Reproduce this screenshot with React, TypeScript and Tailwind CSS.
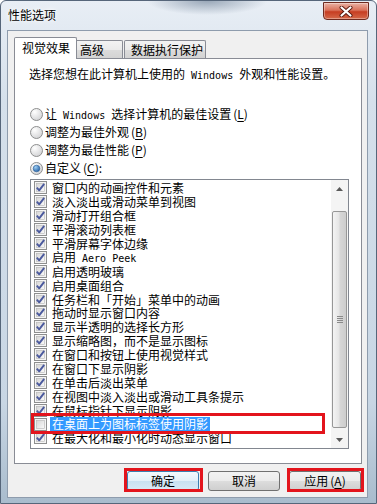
import React from "react";

const cjk = "font-['Noto_Sans_CJK_SC','Noto_Sans',sans-serif]";
const mono = "font-['DejaVu_Sans_Mono',monospace] text-[10px]";

function Key({ k }: { k: string }) {
  return (
    <span className="ml-[2px]">
      (<span className="underline underline-offset-2">{k}</span>)
    </span>
  );
}

function Radio({ on }: { on?: boolean }) {
  return (
    <svg width="13" height="13" viewBox="0 0 13 13" className="shrink-0">
      <defs>
        <radialGradient id="rbg" cx="0.35" cy="0.3" r="0.8">
          <stop offset="0" stopColor="#ffffff" />
          <stop offset="1" stopColor="#cfd0d2" />
        </radialGradient>
        <radialGradient id="rdot" cx="0.35" cy="0.3" r="0.8">
          <stop offset="0" stopColor="#9fd0f5" />
          <stop offset="1" stopColor="#1e5aa0" />
        </radialGradient>
      </defs>
      <circle cx="6.5" cy="6.5" r="6" fill="url(#rbg)" stroke="#8e8f8f" />
      {on && <circle cx="6.5" cy="6.5" r="3.3" fill="url(#rdot)" stroke="#2a5f99" strokeWidth="0.6" />}
    </svg>
  );
}

function Check({ on }: { on: boolean }) {
  return (
    <svg width="13" height="13" viewBox="0 0 13 13" className="shrink-0">
      <defs>
        <linearGradient id="cbg" x1="0" y1="0" x2="1" y2="1">
          <stop offset="0" stopColor="#d6d6d6" />
          <stop offset="1" stopColor="#fafafa" />
        </linearGradient>
      </defs>
      <rect x="0.5" y="0.5" width="12" height="12" fill="#f5f5f5" stroke="#8e8f8f" />
      <rect x="2.5" y="2.5" width="8" height="8" fill="url(#cbg)" stroke="#b4b4b4" strokeWidth="0.6" />
      {on && (
        <path d="M2.8 6.6 L5.2 9.3 L10.2 2.8" fill="none" stroke="#4b5a9e" strokeWidth="1.9" strokeLinejoin="round" />
      )}
    </svg>
  );
}

const items: { t: React.ReactNode; on: boolean; sel?: boolean }[] = [
  { t: "窗口内的动画控件和元素", on: true },
  { t: "淡入淡出或滑动菜单到视图", on: true },
  { t: "滑动打开组合框", on: true },
  { t: "平滑滚动列表框", on: true },
  { t: "平滑屏幕字体边缘", on: true },
  { t: <>启用<span className={mono}> Aero Peek</span></>, on: true },
  { t: "启用透明玻璃", on: true },
  { t: "启用桌面组合", on: true },
  { t: "任务栏和「开始」菜单中的动画", on: true },
  { t: "拖动时显示窗口内容", on: true },
  { t: "显示半透明的选择长方形", on: true },
  { t: "显示缩略图，而不是显示图标", on: true },
  { t: "在窗口和按钮上使用视觉样式", on: true },
  { t: "在窗口下显示阴影", on: true },
  { t: "在单击后淡出菜单", on: true },
  { t: "在视图中淡入淡出或滑动工具条提示", on: true },
  { t: "在鼠标指针下显示阴影", on: true },
  { t: "在桌面上为图标标签使用阴影", on: false, sel: true },
  { t: "在最大化和最小化时动态显示窗口", on: true },
];

function Button({ label, primary }: { label: React.ReactNode; primary?: boolean }) {
  return (
    <div
      className={
        primary
          ? "w-[72px] h-[20px] rounded-[3px] border border-[#3c7fb1] bg-[linear-gradient(#f4f9fd,#e3f0f9_50%,#c9e1f2_51%,#d9eaf6)] flex items-center justify-center text-[12px] text-black"
          : "w-[72px] h-[20px] rounded-[3px] border border-[#707070] bg-[linear-gradient(#f2f2f2,#ebebeb_50%,#dddddd_51%,#cfcfcf)] flex items-center justify-center text-[12px] text-black"
      }
    >
      {label}
    </div>
  );
}

export default function App() {
  return (
    <div
      className={`relative w-[377px] h-[504px] overflow-hidden flex flex-col rounded-t-[6px] border border-[#56667a] bg-[radial-gradient(ellipse_60px_14px_at_55%_0%,#9aa8b8,transparent),linear-gradient(#e8eef5,#d5e0eb_20%,#c8d6e4_80%,#a9bccd)] ${cjk}`}
    >
      {/* title bar */}
      <div className="h-[29px] shrink-0 flex items-start justify-between pl-[7px] pr-[7px]">
        <div className="mt-[6px] text-[12px] leading-[16px] text-black [text-shadow:0_0_6px_#ffffff,0_0_3px_#ffffff]">性能选项</div>
        <div className="mt-[1px] w-[46px] h-[18px] rounded-b-[4px] border border-[#6e2a1f] bg-[linear-gradient(#eab2a4,#d9715a_45%,#c63d22_55%,#d5694a)] flex items-center justify-center shadow-[inset_0_0_0_1px_rgba(255,255,255,0.35)]">
          <svg width="14" height="11" viewBox="0 0 14 11">
            <path d="M2.5 1.5 L11.5 9.5 M11.5 1.5 L2.5 9.5" stroke="#5a1a10" strokeWidth="4" strokeLinecap="round" />
            <path d="M2.5 1.5 L11.5 9.5 M11.5 1.5 L2.5 9.5" stroke="#ffffff" strokeWidth="2.2" strokeLinecap="round" />
          </svg>
        </div>
      </div>

      {/* client area */}
      <div className="ml-[6px] mr-[8px] mb-[5px] flex-1 bg-[#f0f0f0] border border-[#8e9cad] flex flex-col pl-[6px] pr-[6px] pt-[6px]">
        {/* tabs */}
        <div className="flex items-end h-[21px]">
          <div className="relative z-10 -mb-px w-[63px] h-[22px] bg-white border border-b-0 border-[#898c95] rounded-t-[2px] pl-[7px] pt-[3px] text-[12px] leading-[14px] text-black">
            视觉效果
          </div>
          <div className="w-[46px] h-[18px] border border-b-0 border-l-0 border-[#898c95] rounded-tr-[2px] bg-[linear-gradient(#f3f3f3,#ebebeb_50%,#dcdcdc_51%,#d3d3d3)] pl-[3px] pt-[2px] text-[12px] leading-[14px] text-black">
            高级
          </div>
          <div className="ml-[1px] w-[82px] h-[18px] border border-b-0 border-[#898c95] rounded-t-[2px] bg-[linear-gradient(#f3f3f3,#ebebeb_50%,#dcdcdc_51%,#d3d3d3)] pl-[6px] pt-[2px] text-[12px] leading-[14px] text-black">
            数据执行保护
          </div>
        </div>

        {/* panel */}
        <div className="h-[406px] w-[348px] bg-white border border-[#898c95] pl-[14px] pt-[8px] flex flex-col text-[12px] text-black">
          <div className="h-[14px] leading-[14px] whitespace-nowrap">
            选择您想在此计算机上使用的<span className={mono}> Windows </span>外观和性能设置。
          </div>

          <div className="mt-[24px] flex flex-col">
            <div className="h-[18px] flex items-center gap-[2px] ml-[1px]">
              <Radio />
              <span className="whitespace-nowrap">
                让<span className={mono}> Windows </span>选择计算机的最佳设置<Key k="L" />
              </span>
            </div>
            <div className="h-[18px] flex items-center gap-[2px] ml-[1px]">
              <Radio />
              <span>调整为最佳外观<Key k="B" /></span>
            </div>
            <div className="h-[18px] flex items-center gap-[2px] ml-[1px]">
              <Radio />
              <span>调整为最佳性能<Key k="P" /></span>
            </div>
            <div className="h-[18px] flex items-center gap-[2px] ml-[1px]">
              <Radio on />
              <span>自定义<Key k="C" />:</span>
            </div>
          </div>

          {/* list */}
          <div className="mt-[2px] ml-[1px] w-[319px] h-[270px] border border-[#828790] bg-white flex overflow-hidden">
            <div className="flex-1 pt-[1px] pl-[3px] flex flex-col overflow-hidden">
              {items.map((it, i) => (
                <div key={i} className="h-[13.9px] shrink-0 flex items-center whitespace-nowrap">
                  <Check on={it.on} />
                  {it.sel ? (
                    <span className="ml-[3px] px-[2px] h-[13.9px] leading-[13px] bg-[#3399ff] text-white">{it.t}</span>
                  ) : (
                    <span className="ml-[5px] leading-[13px]">{it.t}</span>
                  )}
                </div>
              ))}
            </div>
            {/* scrollbar */}
            <div className="w-[17px] shrink-0 bg-[#f4f4f4] flex flex-col items-center">
              <div className="h-[17px] w-full flex items-center justify-center">
                <svg width="7" height="4" viewBox="0 0 7 4">
                  <path d="M0 4 L3.5 0 L7 4 Z" fill="#595959" />
                </svg>
              </div>
              <div className="h-[14px]" />
              <div className="h-[217px] w-[15px] rounded-[2px] border border-[#979797] bg-[linear-gradient(90deg,#f4f4f4,#e6e6e6_45%,#d6d6d6_55%,#cdcdcd)] flex flex-col items-center justify-center gap-[1px]">
                <div className="w-[6px] h-px bg-[#8a8a8a]" />
                <div className="w-[6px] h-px bg-[#8a8a8a]" />
                <div className="w-[6px] h-px bg-[#8a8a8a]" />
                <div className="w-[6px] h-px bg-[#8a8a8a]" />
              </div>
              <div className="h-[3px]" />
              <div className="h-[17px] w-full flex items-center justify-center">
                <svg width="7" height="4" viewBox="0 0 7 4">
                  <path d="M0 0 L3.5 4 L7 0 Z" fill="#595959" />
                </svg>
              </div>
            </div>
          </div>
        </div>

        {/* buttons */}
        <div className="mt-[7px] flex justify-end gap-[9px]">
          <Button label="确定" primary />
          <Button label="取消" />
          <Button label={<>应用<Key k="A" /></>} />
        </div>
      </div>

      {/* red annotation boxes */}
      <div className="absolute left-[30px] top-[412px] w-[294px] h-[21px] border-[3px] border-[#e3141c]" />
      <div className="absolute left-[123px] top-[467px] w-[79px] h-[24px] border-[3px] border-[#e3141c]" />
      <div className="absolute left-[286px] top-[467px] w-[77px] h-[24px] border-[3px] border-[#e3141c]" />
    </div>
  );
}
